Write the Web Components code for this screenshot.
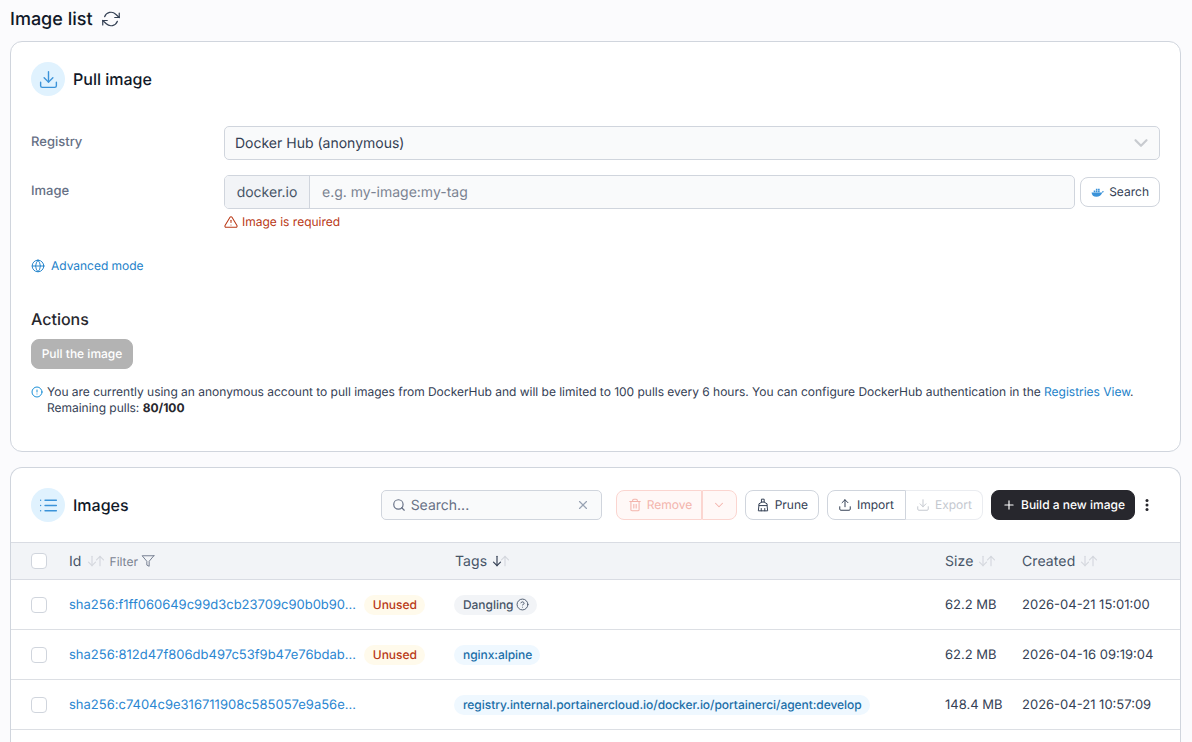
<!DOCTYPE html>
<html lang="en">
<head>
<meta charset="utf-8">
<title>Image list</title>
<style>
  html, body { margin: 0; height: 742px; overflow: hidden; background: #fbfbfd; }
  body { font-family: Inter, "Liberation Sans", sans-serif; color: #101828; text-rendering: geometricPrecision; }
</style>
</head>
<body>
<image-page></image-page>
<script>
const ICONS = {
  refresh: '<path d="M23 4v6h-6"/><path d="M1 20v-6h6"/><path d="M3.500 9a9 9 0 0 1 14.800-3.400L23 10M1 14l4.700 4.400A9 9 0 0 0 20.500 15"/>',
  download: '<path d="M21 15v4a2 2 0 0 1-2 2H5a2 2 0 0 1-2-2v-4"/><path d="M7 10l5 5 5-5"/><path d="M12 15V3"/>',
  upload: '<path d="M21 15v4a2 2 0 0 1-2 2H5a2 2 0 0 1-2-2v-4"/><path d="M17 8l-5-5-5 5"/><path d="M12 3v12"/>',
  alert: '<path d="M10.300 3.900 1.800 18a2 2 0 0 0 1.700 3h17a2 2 0 0 0 1.700-3L13.700 3.900a2 2 0 0 0-3.400 0z"/><path d="M12 9v4"/><path d="M12 17h.01"/>',
  globe: '<circle cx="12" cy="12" r="10"/><path d="M2 12h20"/><path d="M12 2a15 15 0 0 1 4 10 15 15 0 0 1-4 10 15 15 0 0 1-4-10 15 15 0 0 1 4-10z"/>',
  info: '<circle cx="12" cy="12" r="10"/><path d="M12 8v4"/><path d="M12 16h.01"/>',
  search: '<circle cx="11" cy="11" r="8"/><path d="M21 21l-4.300-4.300"/>',
  x: '<path d="M18 6 6 18"/><path d="M6 6l12 12"/>',
  chevron: '<path d="M6 9l6 6 6-6"/>',
  trash: '<path d="M3 6h18"/><path d="M19 6v14a2 2 0 0 1-2 2H7a2 2 0 0 1-2-2V6"/><path d="M8 6V4a2 2 0 0 1 2-2h4a2 2 0 0 1 2 2v2"/><path d="M10 11v6"/><path d="M14 11v6"/>',
  brush: '<path d="M10 2h4v5h-4z"/><path d="M10 7 5 10v3h14v-3l-5-3"/><path d="M5 13l-1 9h16l-1-9"/><path d="M9 22v-4"/><path d="M15 22v-4"/>',
  plus: '<path d="M12 5v14"/><path d="M5 12h14"/>',
  list: '<path d="M8 6h13"/><path d="M8 12h13"/><path d="M8 18h13"/><path d="M3 6h.01"/><path d="M3 12h.01"/><path d="M3 18h.01"/>',
  filter: '<path d="M22 3H2l8 9.500V19l4 2v-8.500L22 3z"/>',
  help: '<circle cx="12" cy="12" r="10"/><path d="M9.100 9a3 3 0 0 1 5.800 1c0 2-3 3-3 3"/><path d="M12 17h.01"/>',
  down: '<path d="M12 4v16"/><path d="M6 14l6 6 6-6"/>',
  up: '<path d="M12 20V4"/><path d="M6 10l6-6 6 6"/>'
};

class AppIcon extends HTMLElement {
  connectedCallback() {
    const size = this.getAttribute('size') || '14';
    const sw = this.getAttribute('stroke') || '2';
    this.attachShadow({ mode: 'open' }).innerHTML = `
      <style>:host { display: inline-flex; flex: none; } svg { display: block; }</style>
      <svg width="${size}" height="${size}" viewBox="0 0 24 24" fill="none" stroke="currentColor"
        stroke-width="${sw}" stroke-linecap="round" stroke-linejoin="round">${ICONS[this.getAttribute('name')]}</svg>`;
  }
}
customElements.define('app-icon', AppIcon);

class SortArrows extends HTMLElement {
  connectedCallback() {
    const active = this.hasAttribute('active');
    this.attachShadow({ mode: 'open' }).innerHTML = `
      <style>
        :host { display: inline-flex; margin-left: 3px; color: #d5d8de; }
        app-icon + app-icon { margin-left: -6px; }
        .on { color: #344054; }
      </style>
      <app-icon name="down" size="14" stroke="2" class="${active ? 'on' : ''}"></app-icon><app-icon name="up" size="14" stroke="2"></app-icon>`;
  }
}
customElements.define('sort-arrows', SortArrows);

class WidgetCard extends HTMLElement {
  connectedCallback() {
    this.attachShadow({ mode: 'open' }).innerHTML = `
      <style>
        :host { display: block; background: #fff; border: 1px solid #d0d5dd; border-radius: 12px; overflow: hidden; }
        :host([open]) { border-bottom: 0; border-radius: 12px 12px 0 0; }
        header { display: flex; align-items: center; height: 74px; padding: 0 20px; box-sizing: border-box; }
        .badge { width: 34px; height: 34px; border-radius: 50%; background: #e0f2fe; color: #3b93d9;
          display: flex; align-items: center; justify-content: center; margin-right: 8px; }
        h2 { margin: 0; font-size: 16px; line-height: 24px; font-weight: 500; color: #101828; }
        .actions { margin-left: auto; display: flex; align-items: center; }
      </style>
      <header>
        <span class="badge"><app-icon name="${this.getAttribute('icon')}" size="21" stroke="1.600"></app-icon></span>
        <h2>${this.getAttribute('heading')}</h2>
        <div class="actions"><slot name="actions"></slot></div>
      </header>
      <slot></slot>`;
  }
}
customElements.define('widget-card', WidgetCard);

class UiButton extends HTMLElement {
  connectedCallback() {
    this.attachShadow({ mode: 'open' }).innerHTML = `
      <style>
        :host { display: inline-flex; align-items: center; gap: 5px; height: 30px; box-sizing: border-box; padding: 0 10px;
          font-size: 12px; font-weight: 500; line-height: 16px; white-space: nowrap; background: #fff; color: #344054;
          border: 1px solid #d0d5dd; border-radius: 8px; }
        :host([disabled]) { color: #c4c8cf; border-color: #eaecf0; }
        :host([danger]) { color: #f3b4ac; border-color: #fbd5d0; background: #fff8f7; }
        :host([primary]) { color: #fff; background: #27272d; border-color: #27272d; }
        :host([grey]) { color: #fff; background: #b3b3b3; border-color: #b3b3b3; }
      </style>
      <slot></slot>`;
  }
}
customElements.define('ui-button', UiButton);

class PullForm extends HTMLElement {
  connectedCallback() {
    this.attachShadow({ mode: 'open' }).innerHTML = `
      <style>
        :host { display: block; padding: 10px 20px 0; height: 335px; box-sizing: border-box; font-size: 12px; }
        .row { display: grid; grid-template-columns: 193px 1fr; align-items: center; height: 34px; margin-bottom: 15px; }
        label { font-weight: 450; color: #667085; font-size: 13px; position: relative; top: -1px; }
        .select { display: flex; align-items: center; justify-content: space-between; height: 34px; box-sizing: border-box;
          padding: 0 7px 0 10px; background: #f9fafb; border: 1px solid #d0d5dd; border-radius: 5px; font-size: 14px; color: #344054; }
        .select app-icon { color: #c8cbd0; }
        .img { display: flex; gap: 5px; align-items: center; }
        .group { flex: 1; display: flex; height: 34px; box-sizing: border-box; background: #f9fafb; border: 1px solid #d0d5dd; border-radius: 5px; overflow: hidden; font-size: 14px; }
        .addon { width: 85px; flex: none; box-sizing: border-box; display: flex; align-items: center; justify-content: center; background: #f2f4f7; border-right: 1px solid #d0d5dd; color: #475467; }
        .ph { padding-left: 12px; display: flex; align-items: center; color: #7b8392; }
        .whale { color: #3b93d9; }
        .err { display: flex; align-items: center; gap: 4px; margin: -10px 0 0 193px; height: 16px; color: #b93815; line-height: 16px; }
        .adv { display: flex; align-items: center; gap: 6px; margin-top: 28px; color: #1b7fc9; line-height: 16px; height: 16px; letter-spacing: -0.02px; }
        h3 { margin: 33px 0 0; font-size: 16px; line-height: 24px; font-weight: 500; color: #27272d; }
        .pull { margin-top: 8px; width: 102px; padding: 0; justify-content: center; }
        .note { position: relative; margin-top: 15px; padding-left: 16px; line-height: 16px; color: #344054; letter-spacing: -0.018px; }
        .note app-icon { position: absolute; left: 0; top: 2px; color: #1b8fd6; }
        a { color: #1b7fc9; text-decoration: none; }
        b { font-weight: 700; color: #27272d; }
      </style>
      <div class="row"><label>Registry</label>
        <div class="select">Docker Hub (anonymous)<app-icon name="chevron" size="22" stroke="2.400"></app-icon></div></div>
      <div class="row"><label>Image</label>
        <div class="img">
          <div class="group"><span class="addon">docker.io</span><span class="ph">e.g. my-image:my-tag</span></div>
          <ui-button>
            <svg class="whale" width="13" height="11" viewBox="0 0 24 18" fill="currentColor"><path d="M1 9h18c1.400 0 2-2 2-3 1 0 2.200.3 3 1-.6 1.400-1.600 2-3 2-1.800 5-6 8-11 8-5.500 0-8.500-3-9-8z"/><path d="M5 5.500h3v3H5zM9 5.500h3v3H9zM13 5.500h3v3h-3zM9 2h3v3H9zM13 2h3v3h-3z"/></svg>
            <span style="font-weight:400">Search</span></ui-button>
        </div></div>
      <div class="err"><app-icon name="alert" size="14" stroke="1.800"></app-icon>Image is required</div>
      <div class="adv"><app-icon name="globe" size="14" stroke="1.600"></app-icon>Advanced mode</div>
      <h3>Actions</h3>
      <ui-button grey class="pull">Pull the image</ui-button>
      <div class="note"><app-icon name="info" size="12" stroke="2"></app-icon>You are currently using an anonymous account to pull images from DockerHub and will be limited to 100 pulls every 6 hours. You can configure DockerHub authentication in the <a>Registries View</a>.<br>Remaining pulls: <b>80/100</b></div>`;
  }
}
customElements.define('pull-form', PullForm);

class TableActions extends HTMLElement {
  connectedCallback() {
    this.attachShadow({ mode: 'open' }).innerHTML = `
      <style>
        :host { display: flex; align-items: center; font-size: 12px; margin-right: 1px; }
        .search { width: 221px; height: 30px; box-sizing: border-box; display: flex; align-items: center; padding: 0 11px 0 10px; gap: 5px;
          background: #f9fafb; border: 1px solid #d0d5dd; border-radius: 5px; font-size: 14px; color: #667085; margin-right: 14px; }
        .search span { flex: 1; }
        .search .x { color: #98a2b3; }
        .split { display: inline-flex; margin-right: 8px; }
        .split ui-button:first-child { border-radius: 8px 0 0 8px; border-right-width: 0; }
        .split ui-button:last-child { border-radius: 0 8px 8px 0; }
        .remove { width: 86px; padding: 0 0 0 11px; border-right: 1px solid #fbd5d0 !important; }
        .caret { width: 35px; justify-content: center; padding: 0; }
        .more { color: #27272d; width: 24px; display: flex; justify-content: center; }
      </style>
      <div class="search"><app-icon name="search" size="14"></app-icon><span>Search...</span><app-icon class="x" name="x" size="14"></app-icon></div>
      <div class="split">
        <ui-button danger class="remove"><app-icon name="trash" size="14" stroke="1.800"></app-icon><span style="font-weight:400">Remove</span></ui-button>
        <ui-button danger class="caret"><app-icon name="chevron" size="14" stroke="1.800"></app-icon></ui-button>
      </div>
      <ui-button style="margin-right:8px"><app-icon name="brush" size="14" stroke="1.700"></app-icon><span style="font-weight:400">Prune</span></ui-button>
      <div class="split">
        <ui-button style="width:79px;border-right:1px solid #d0d5dd"><app-icon name="upload" size="14" stroke="1.700"></app-icon><span style="font-weight:400">Import</span></ui-button>
        <ui-button disabled style="width:77px;border-left-width:0"><app-icon name="download" size="14" stroke="1.700"></app-icon><span style="font-weight:400">Export</span></ui-button>
      </div>
      <ui-button primary style="width:144px"><app-icon name="plus" size="14" stroke="2"></app-icon>Build a new image</ui-button>
      <span class="more"><svg width="4" height="14" viewBox="0 0 4 14" fill="currentColor"><circle cx="2" cy="2.500" r="1.500"/><circle cx="2" cy="7" r="1.500"/><circle cx="2" cy="11.500" r="1.500"/></svg></span>`;
  }
}
customElements.define('table-actions', TableActions);

const COLS = 'grid-template-columns: 58px 386px 490px 77px 1fr;';
const CHECK = 'width: 16px; height: 16px; box-sizing: border-box; border: 1px solid #d0d5dd; border-radius: 4px; background: #fff; margin-left: 20px;';

class TableHead extends HTMLElement {
  connectedCallback() {
    this.attachShadow({ mode: 'open' }).innerHTML = `
      <style>
        :host { display: grid; ${COLS} align-items: center; height: 38px; box-sizing: border-box; background: #f2f4f7;
          border-top: 1px solid #d9dce3; border-bottom: 1px solid #d9dce3; font-size: 14px; font-weight: 400; letter-spacing: 0.1px; color: #475467; }
        .c { ${CHECK} }
        div { display: flex; align-items: center; }
        .f { margin-left: 3px; font-size: 12px; font-weight: 400; letter-spacing: 0; color: #7b8392; gap: 3px; }
        .f app-icon { color: #667085; }
      </style>
      <span class="c"></span>
      <div>Id<sort-arrows></sort-arrows><span class="f" style="display:flex">Filter <app-icon name="filter" size="14" stroke="1.500"></app-icon></span></div>
      <div>Tags<sort-arrows active></sort-arrows></div>
      <div>Size<sort-arrows></sort-arrows></div>
      <div>Created<sort-arrows></sort-arrows></div>`;
  }
}
customElements.define('table-head', TableHead);

class ImageRow extends HTMLElement {
  connectedCallback() {
    const a = n => this.getAttribute(n);
    const unused = this.hasAttribute('unused') ? '<span class="unused">Unused</span>' : '';
    const tag = a('tag') === 'Dangling'
      ? '<span class="pill grey">Dangling <app-icon name="help" size="13" stroke="1.700"></app-icon></span>'
      : `<span class="pill">${a('tag')}</span>`;
    this.attachShadow({ mode: 'open' }).innerHTML = `
      <style>
        :host { display: grid; ${COLS} align-items: center; height: 50px; box-sizing: border-box; background: #fff;
          border-bottom: 1px solid #dcdfe4; font-size: 13px; color: #344054; }
        .c { ${CHECK} }
        .id { display: flex; align-items: center; padding-right: 30px; }
        a { color: #2a86d1; text-decoration: none; white-space: nowrap; width: 289px; flex: none; }
        .unused { flex: none; margin-left: auto; height: 20px; line-height: 20px; padding: 0 8px 0 9px; border-radius: 10px; background: #fffaeb; color: #b93815; font-size: 12px; font-weight: 450; }
        .pill { display: inline-flex; align-items: center; gap: 3px; height: 20px; padding: 0 8px 0 9px; border-radius: 10px; background: #eff8ff; font-size: 12px; font-weight: 450; letter-spacing: -0.05px; color: #1a6ea8; }
        .grey { background: #f2f4f7; color: #475467; }
      </style>
      <span class="c"></span>
      <div class="id"><a>${a('sha')}</a>${unused}</div>
      <div style="margin-left:-1px">${tag}</div>
      <div>${a('size')}</div>
      <div>${a('created')}</div>`;
  }
}
customElements.define('image-row', ImageRow);

class ImagePage extends HTMLElement {
  connectedCallback() {
    this.attachShadow({ mode: 'open' }).innerHTML = `
      <style>
        :host { display: block; padding: 0 11px 0 10px; }
        .title { display: flex; align-items: center; gap: 9px; height: 41px; padding-bottom: 3px; box-sizing: border-box; font-size: 18px; font-weight: 500; color: #101828; }
        .title app-icon { color: #344054; }
        widget-card + widget-card { margin-top: 15px; }
        .rest { height: 12px; background: #fff; }
      </style>
      <div class="title">Image list <app-icon name="refresh" size="18" stroke="1.600"></app-icon></div>
      <widget-card icon="download" heading="Pull image"><pull-form></pull-form></widget-card>
      <widget-card open icon="list" heading="Images">
        <table-actions slot="actions"></table-actions>
        <table-head></table-head>
        <image-row unused sha="sha256:f1ff060649c99d3cb23709c90b0b90..." tag="Dangling" size="62.2 MB" created="2026-04-21 15:01:00"></image-row>
        <image-row unused sha="sha256:812d47f806db497c53f9b47e76bdab..." tag="nginx:alpine" size="62.2 MB" created="2026-04-16 09:19:04"></image-row>
        <image-row sha="sha256:c7404c9e316711908c585057e9a56e..." tag="registry.internal.portainercloud.io/docker.io/portainerci/agent:develop" size="148.4 MB" created="2026-04-21 10:57:09"></image-row>
        <div class="rest"></div>
      </widget-card>`;
  }
}
customElements.define('image-page', ImagePage);
</script>
</body>
</html>
